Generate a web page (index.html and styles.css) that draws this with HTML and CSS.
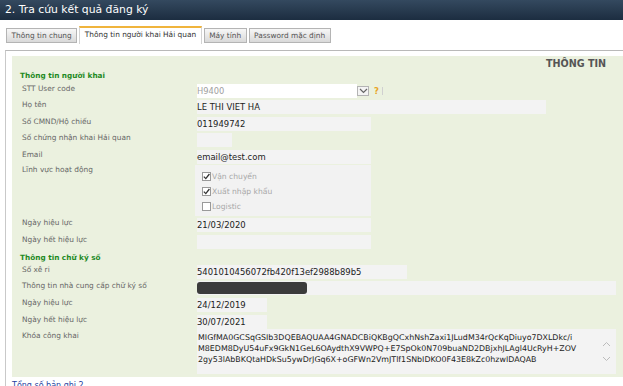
FILE: index.html
```html
<!DOCTYPE html>
<html>
  <head>
    <meta charset="utf-8">
    <title>Tra cứu kết quả đăng ký</title>
    <link rel="stylesheet" href="styles.css">
  </head>
  <body>

    <div class="topbar">2. Tra cứu kết quả đăng ký</div>

    <div class="tabs">
      <span class="tab">Thông tin chung</span>
      <span class="tab active">Thông tin người khai Hải quan</span>
      <span class="tab">Máy tính</span>
      <span class="tab">Password mặc định</span>
    </div>

    <div class="panel">
      <div class="form">
        <div class="form-title">THÔNG TIN</div>

        <!--nguoi khai-->
        <div class="section">Thông tin người khai</div>
        <div class="fields">
          <div class="row">
            <div class="lbl">STT User code</div>
            <div class="val">
              <div class="select"><span class="muted">H9400</span></div>
              <span class="arrow"><svg width="9" height="6" viewBox="0 0 9 6"><polyline points="1,1 4.5,4.5 8,1" fill="none" stroke="#666" stroke-width="1.2"/></svg></span>
              <span class="help">?</span>
              <span class="tick"></span>
            </div>
          </div>

          <div class="row">
            <div class="lbl">Họ tên</div>
            <div class="val"><div class="box w-name">LE THI VIET HA</div></div>
          </div>

          <div class="row">
            <div class="lbl">Số CMND/Hộ chiếu</div>
            <div class="val"><div class="box w-mid">011949742</div></div>
          </div>

          <div class="row">
            <div class="lbl">Số chứng nhận khai Hải quan</div>
            <div class="val"><div class="box w-tiny"></div></div>
          </div>

          <div class="row">
            <div class="lbl">Email</div>
            <div class="val"><div class="box w-mid">email@test.com</div></div>
          </div>

          <div class="row tall">
            <div class="lbl">Lĩnh vực hoạt động</div>
            <div class="val">
              <div class="checks">
                <div class="check"><span class="cb"><svg width="9" height="9" viewBox="0 0 9 9"><polyline points="1.8,4.6 3.8,6.6 7.4,2" fill="none" stroke="#333" stroke-width="1.3"/></svg></span>Vận chuyển</div>
                <div class="check"><span class="cb"><svg width="9" height="9" viewBox="0 0 9 9"><polyline points="1.8,4.6 3.8,6.6 7.4,2" fill="none" stroke="#333" stroke-width="1.3"/></svg></span>Xuất nhập khẩu</div>
                <div class="check"><span class="cb"></span>Logistic</div>
              </div>
            </div>
          </div>

          <div class="row">
            <div class="lbl">Ngày hiệu lực</div>
            <div class="val"><div class="box w-mid">21/03/2020</div></div>
          </div>

          <div class="row">
            <div class="lbl">Ngày hết hiệu lực</div>
            <div class="val"><div class="box w-mid"></div></div>
          </div>
        </div>

        <!--chu ky so-->
        <div class="section second">Thông tin chữ ký số</div>
        <div class="fields sign">
          <div class="row">
            <div class="lbl">Số xê ri</div>
            <div class="val"><div class="box w-serial">5401010456072fb420f13ef2988b89b5</div></div>
          </div>

          <div class="row">
            <div class="lbl">Thông tin nhà cung cấp chữ ký số</div>
            <div class="val"><div class="box w-full"><span class="redact"></span></div></div>
          </div>

          <div class="row">
            <div class="lbl">Ngày hiệu lực</div>
            <div class="val"><div class="box w-date">24/12/2019</div></div>
          </div>

          <div class="row">
            <div class="lbl">Ngày hết hiệu lực</div>
            <div class="val"><div class="box w-date">30/07/2021</div></div>
          </div>

          <div class="row key">
            <div class="lbl">Khóa công khai</div>
            <div class="val">
              <div class="textarea">
                <div class="keytext">MIGfMA0GCSqGSIb3DQEBAQUAA4GNADCBiQKBgQCxhNshZaxi1JLudM34rQcKqDiuyo7DXLDkc/i<br>M8EDM8DyU54uFx9GkN1GeL6OAydthX9VWPQ+E7SpOk0N709buaND2DBjxhJLAgl4UcRyH+ZOV<br>2gy53lAbBKQtaHDkSu5ywDrJGq6X+oGFWn2VmJTlf1SNbIDKO0F43E8kZc0hzwIDAQAB</div>
                <div class="scroll">
                  <svg width="9" height="6" viewBox="0 0 9 6"><polyline points="1,5 4.5,1.5 8,5" fill="none" stroke="#bbb" stroke-width="1"/></svg>
                  <svg width="9" height="6" viewBox="0 0 9 6"><polyline points="1,1 4.5,4.5 8,1" fill="none" stroke="#bbb" stroke-width="1"/></svg>
                </div>
              </div>
            </div>
          </div>
        </div>
      </div>

      <a class="total" href="#">Tổng số bản ghi 2</a>
    </div>

  </body>
</html>
```
FILE: styles.css
```css
html,body{
  margin: 0px;
  padding: 0px;
  width: 623px;
  height: 386px;
  overflow: hidden;
  background-color: #FFF;
  font-family: "DejaVu Sans", Verdana, sans-serif;
}

.topbar{
  height: 20px;
  line-height: 20px;
  padding-left: 5px;
  color: #FFF;
  font-size: 10.8px;
  background: linear-gradient(#34495f, #1c2d40);
  white-space: nowrap;
}

/* tabs */
.tabs{
  display: flex;
  align-items: flex-start;
  gap: 2px;
  padding: 8px 0 0 6px;
  height: 30px;
  box-sizing: border-box;
}

.tab{
  font-size: 7.4px;
  line-height: 13px;
  padding: 0 4.5px;
  color: #555;
  border: 1px solid #b4b4b4;
  background: linear-gradient(#f7f7f7, #d9d9d9);
  white-space: nowrap;
}

.tab.active{
  margin-top: -2px;
  padding-bottom: 3px;
  color: #333;
  background: #FFF;
  border-color: #d4d4d4;
  border-top: 2px solid #f0b43c;
  border-bottom: none;
}

/* panel */
.panel{
  margin-left: 5px;
  border-top: 1px solid #b9b9b9;
  border-left: 1px solid #c9c9c9;
  padding: 5px 0 0 6px;
}

.form{
  background-color: #ebf1df;
  padding: 1px 0 3px 10px;
}

.form-title{
  padding-left: 524px;
  font-size: 9.6px;
  font-weight: bold;
  line-height: 13px;
  color: #555;
  white-space: nowrap;
}

.section{
  margin: 1px 0 0 -2px;
  font-size: 7.3px;
  font-weight: bold;
  line-height: 10px;
  color: #1f8a1f;
}

.section.second{
  margin-top: 4px;
}

.fields{
  display: flex;
  flex-direction: column;
  gap: 2.4px;
  margin-top: 3px;
}

.fields.sign{
  margin-top: 2px;
  gap: 2.6px;
}

.row{
  display: flex;
  height: 14px;
}

.row.tall{
  height: 51px;
  margin-top: -1px;
}

.row.key{
  height: 45px;
  margin-top: -2px;
}

.lbl{
  width: 175px;
  flex: none;
  font-size: 7.4px;
  line-height: 10px;
  color: #666;
  white-space: nowrap;
}

.row.key .lbl{
  padding-top: 2px;
}

.val{
  display: flex;
  align-items: center;
  height: 14px;
}

.row.tall .val,
.row.key .val{
  align-items: flex-start;
  height: auto;
}

.box{
  height: 14px;
  line-height: 14px;
  background-color: #f3f3f3;
  font-size: 8.45px;
  color: #222;
  white-space: nowrap;
  box-sizing: border-box;
  overflow: hidden;
}

.w-name{ width: 349px; }
.w-mid{ width: 174px; }
.w-tiny{ width: 35px; }
.w-serial{ width: 210px; }
.w-full{ width: 419px; position: relative; }
.w-date{ width: 70px; }

.select{
  width: 160px;
  height: 14px;
  line-height: 14px;
  background: #FFF;
  font-size: 8.3px;
}

.muted{
  color: #a0a0a0;
}

.arrow{
  display: flex;
  align-items: center;
  justify-content: center;
  width: 12px;
  height: 10px;
  border: 1px solid #b4b4b4;
  background: #f4f4f4;
  box-sizing: border-box;
}

.help{
  margin-left: 5px;
  font-size: 8.5px;
  font-weight: bold;
  color: #e8a526;
}

.tick{
  margin-left: 3px;
  width: 1px;
  height: 8px;
  background: #d0d0d0;
}

.checks{
  width: 176px;
  height: 51px;
  margin-left: -2px;
  background: #f2f2f2;
  padding: 5px 0 0 7px;
  box-sizing: border-box;
}

.check{
  display: flex;
  align-items: center;
  height: 16px;
  margin-top: -1px;
  font-size: 7.6px;
  color: #a8a8a8;
}

.cb{
  width: 9px;
  height: 9px;
  margin-right: 1px;
  border: 1px solid #999;
  background: #fff;
  box-sizing: border-box;
  display: flex;
}

.cb svg{
  margin: -1px;
}

.redact{
  position: absolute;
  left: 0px;
  top: 1px;
  width: 110px;
  height: 12px;
  border-radius: 3px;
  background: #3b3b3b;
}

.textarea{
  display: flex;
  width: 419px;
  height: 45px;
  background: #f3f3f3;
}

.keytext{
  flex: 1;
  padding: 3px 0 0 1px;
  font-size: 7.9px;
  line-height: 11px;
  color: #222;
  white-space: nowrap;
  overflow: hidden;
}

.scroll{
  display: flex;
  flex-direction: column;
  justify-content: center;
  gap: 9px;
  width: 12px;
  padding-right: 2px;
}

.total{
  display: block;
  margin: 4px 0 0 0;
  font-size: 8px;
  color: #1f3f9f;
  text-decoration: none;
}
```
